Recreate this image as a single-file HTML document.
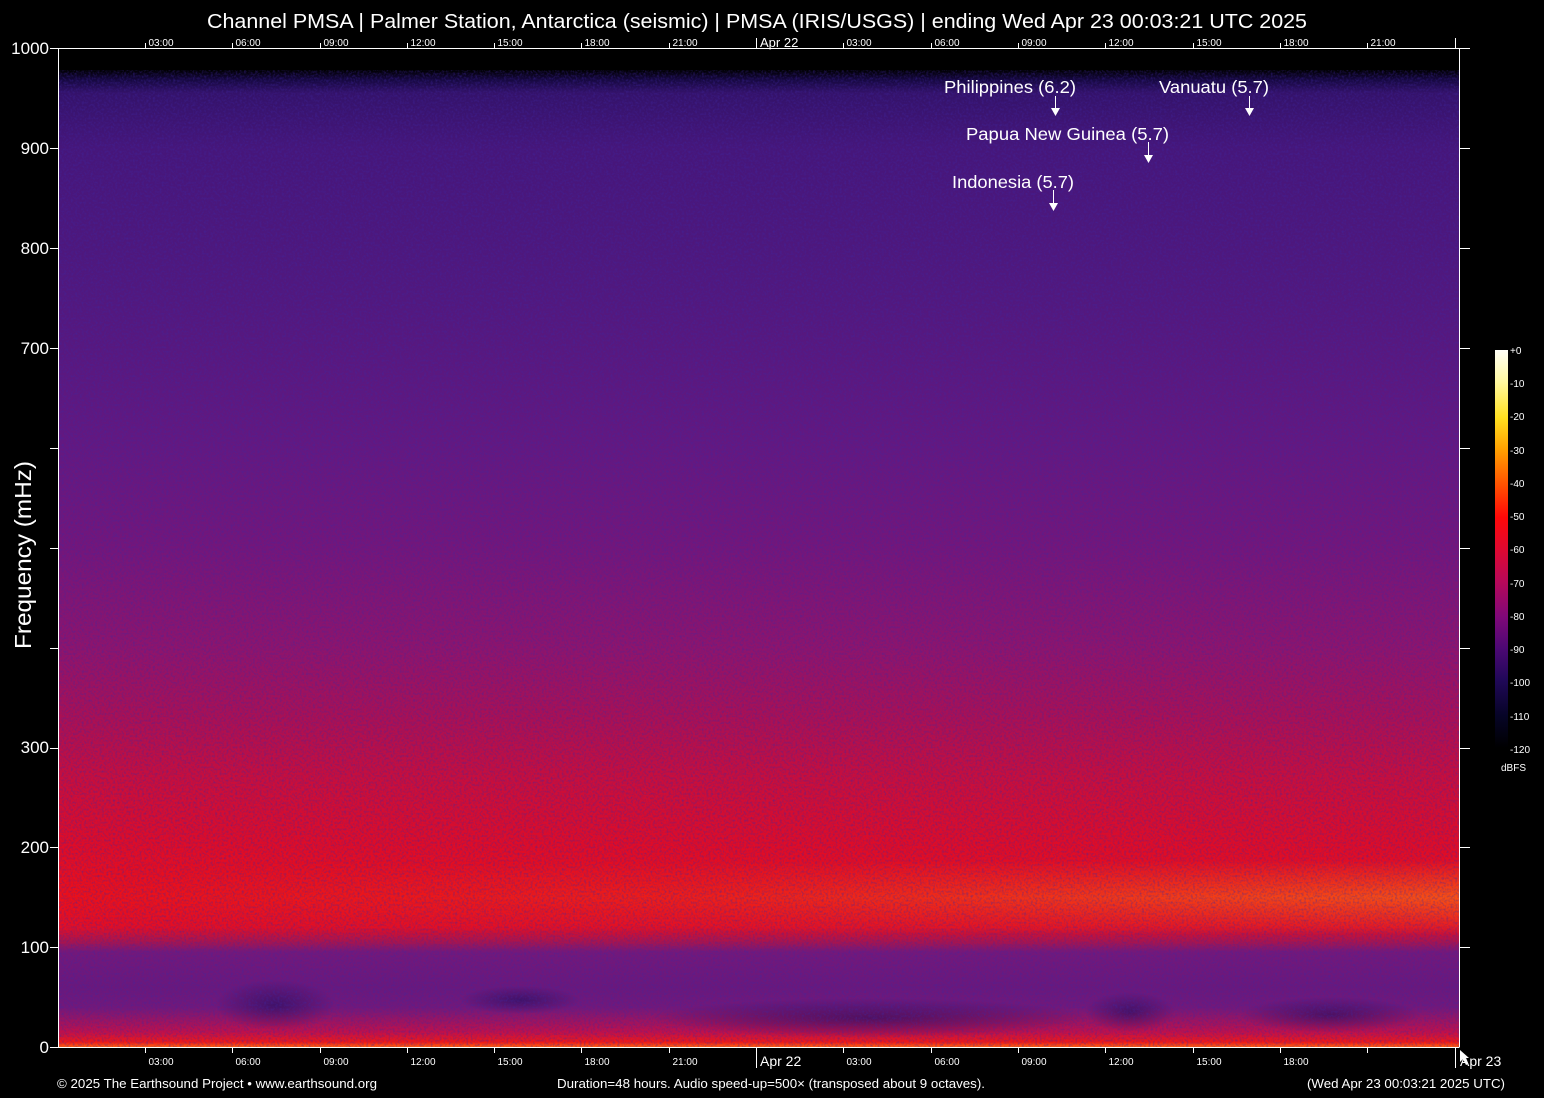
<!DOCTYPE html>
<html><head><meta charset="utf-8"><style>
html,body{margin:0;padding:0;background:#000;}
body{width:1544px;height:1098px;overflow:hidden;}
svg{display:block;font-family:"Liberation Sans",Arial,sans-serif;}
</style></head><body>
<svg width="1544" height="1098" viewBox="0 0 1544 1098" xmlns="http://www.w3.org/2000/svg">
<defs>
<linearGradient id="v" x1="0" y1="48" x2="0" y2="1047" gradientUnits="userSpaceOnUse">
<stop offset="0" stop-color="#000"/>
<stop offset="0.022" stop-color="#000"/>
<stop offset="0.032" stop-color="#160840"/>
<stop offset="0.045" stop-color="#34126a"/>
<stop offset="0.1" stop-color="#46167a"/>
<stop offset="0.25" stop-color="#52187e"/>
<stop offset="0.4" stop-color="#641880"/>
<stop offset="0.5" stop-color="#74167a"/>
<stop offset="0.6" stop-color="#8e146c"/>
<stop offset="0.67" stop-color="#aa1054"/>
<stop offset="0.73" stop-color="#c80e3c"/>
<stop offset="0.8" stop-color="#e00c26"/>
<stop offset="0.85" stop-color="#ec101a"/>
<stop offset="0.88" stop-color="#e40e24"/>
<stop offset="0.895" stop-color="#a8144e"/>
<stop offset="0.905" stop-color="#74187a"/>
<stop offset="0.94" stop-color="#6a187c"/>
<stop offset="0.96" stop-color="#72187a"/>
<stop offset="0.985" stop-color="#c0104a"/>
<stop offset="0.995" stop-color="#f01818"/>
<stop offset="1" stop-color="#ff6010"/>
</linearGradient>
<linearGradient id="h" x1="58" y1="0" x2="1459" y2="0" gradientUnits="userSpaceOnUse">
<stop offset="0" stop-color="#ff6a10" stop-opacity="0"/>
<stop offset="0.45" stop-color="#ff6a10" stop-opacity="0.15"/>
<stop offset="1" stop-color="#ff7a10" stop-opacity="0.6"/>
</linearGradient>
<linearGradient id="mv" x1="0" y1="860" x2="0" y2="935" gradientUnits="userSpaceOnUse">
<stop offset="0" stop-color="#fff" stop-opacity="0"/>
<stop offset="0.5" stop-color="#fff" stop-opacity="1"/>
<stop offset="1" stop-color="#fff" stop-opacity="0"/>
</linearGradient>
<mask id="m"><rect x="58" y="860" width="1401" height="75" fill="url(#mv)"/></mask>
<linearGradient id="cb" x1="0" y1="350" x2="0" y2="748" gradientUnits="userSpaceOnUse">
<stop offset="0" stop-color="#fffff8"/>
<stop offset="0.08" stop-color="#fff8a0"/>
<stop offset="0.17" stop-color="#ffe020"/>
<stop offset="0.25" stop-color="#ffa000"/>
<stop offset="0.34" stop-color="#ff5000"/>
<stop offset="0.42" stop-color="#ff0808"/>
<stop offset="0.5" stop-color="#e00830"/>
<stop offset="0.58" stop-color="#b80858"/>
<stop offset="0.67" stop-color="#800878"/>
<stop offset="0.75" stop-color="#4c0874"/>
<stop offset="0.83" stop-color="#200858"/>
<stop offset="0.92" stop-color="#060426"/>
<stop offset="1" stop-color="#000"/>
</linearGradient>
<filter id="n" x="0" y="0" width="100%" height="100%">
<feTurbulence type="fractalNoise" baseFrequency="0.45" numOctaves="2" seed="3"/>
<feColorMatrix type="matrix" values="0 0 0 0 0.05  0 0 0 0 0.02  0 0 0 0 0.35  0 0 0 -2.2 1.3"/>
</filter>
<radialGradient id="dk" cx="0.5" cy="0.5" r="0.5">
<stop offset="0" stop-color="#1a0c5a" stop-opacity="0.55"/>
<stop offset="1" stop-color="#1a0c5a" stop-opacity="0"/>
</radialGradient>
</defs>
<rect x="58" y="48" width="1401" height="999" fill="url(#v)"/>
<rect x="58" y="860" width="1401" height="75" fill="url(#h)" mask="url(#m)"/>
<ellipse cx="870" cy="1018" rx="220" ry="20" fill="url(#dk)"/>
<ellipse cx="1330" cy="1015" rx="90" ry="18" fill="url(#dk)"/>
<ellipse cx="1130" cy="1012" rx="45" ry="20" fill="url(#dk)"/>
<ellipse cx="275" cy="1005" rx="60" ry="25" fill="url(#dk)"/>
<ellipse cx="520" cy="1000" rx="60" ry="14" fill="url(#dk)"/>
<rect x="58" y="70" width="1401" height="977" filter="url(#n)" opacity="0.45"/>

<g stroke="#fff" stroke-width="1" fill="none">
<path d="M58.5 48V1047.5M58 48.5H1459M58 1047.5H1459M1459.5 48V1047.5"/>
<path d="M50 48.5H58M50 148.5H58M50 248.5H58M50 348.5H58M50 448.5H58M50 548.5H58M50 648.5H58M50 748.5H58M50 847.5H58M50 947.5H58M50 1047.5H58"/>
<path d="M1459 48.5H1470M1459 148.5H1470M1459 248.5H1470M1459 348.5H1470M1459 448.5H1470M1459 548.5H1470M1459 648.5H1470M1459 748.5H1470M1459 847.5H1470M1459 947.5H1470"/>
<path d="M145.5 1047V1053M232.5 1047V1053M320.5 1047V1053M407.5 1047V1053M494.5 1047V1053M581.5 1047V1053M669.5 1047V1053M756.5 1047V1068M843.5 1047V1053M931.5 1047V1053M1018.5 1047V1053M1105.5 1047V1053M1193.5 1047V1053M1280.5 1047V1053M1367.5 1047V1053M1455.5 1047V1068"/>
<path d="M145.5 43V48M232.5 43V48M320.5 43V48M407.5 43V48M494.5 43V48M581.5 43V48M669.5 43V48M756.5 38V48M843.5 43V48M931.5 43V48M1018.5 43V48M1105.5 43V48M1193.5 43V48M1280.5 43V48M1367.5 43V48M1455.5 38V48"/>
<path d="M1055.5 96V110M1249.5 96V110M1148.5 142V157M1053.5 190V205"/>
</g>
<g fill="#fff">
<path d="M1051 108H1060L1055.5 116Z M1245 108H1254L1249.5 116Z M1144 155H1153L1148.5 163Z M1049 203H1058L1053.5 211Z"/>
<path d="M1460 1050L1460 1062L1463 1059L1466 1065L1468 1064L1465 1058L1469 1058Z"/>
</g>
<rect x="1495" y="350" width="13" height="398" fill="url(#cb)"/>

<g fill="#fff">
<text x="207" y="28" font-size="20.5" textLength="1100" lengthAdjust="spacingAndGlyphs">Channel PMSA | Palmer Station, Antarctica (seismic) | PMSA (IRIS/USGS) | ending Wed Apr 23 00:03:21 UTC 2025</text>
<g font-size="17" text-anchor="end">
<text x="49" y="54">1000</text><text x="49" y="154">900</text><text x="49" y="254">800</text><text x="49" y="354">700</text>
<text x="49" y="753">300</text><text x="49" y="853">200</text><text x="49" y="953">100</text><text x="49" y="1053">0</text>
</g>
<text transform="translate(31,555) rotate(-90)" font-size="23" text-anchor="middle" textLength="188" lengthAdjust="spacingAndGlyphs">Frequency (mHz)</text>
<g font-size="10" text-anchor="middle">
<text x="161" y="46">03:00</text><text x="248" y="46">06:00</text><text x="336" y="46">09:00</text><text x="423" y="46">12:00</text>
<text x="510" y="46">15:00</text><text x="597" y="46">18:00</text><text x="685" y="46">21:00</text>
<text x="859" y="46">03:00</text><text x="947" y="46">06:00</text><text x="1034" y="46">09:00</text><text x="1121" y="46">12:00</text>
<text x="1209" y="46">15:00</text><text x="1296" y="46">18:00</text><text x="1383" y="46">21:00</text>
<text x="161" y="1065">03:00</text><text x="248" y="1065">06:00</text><text x="336" y="1065">09:00</text><text x="423" y="1065">12:00</text>
<text x="510" y="1065">15:00</text><text x="597" y="1065">18:00</text><text x="685" y="1065">21:00</text>
<text x="859" y="1065">03:00</text><text x="947" y="1065">06:00</text><text x="1034" y="1065">09:00</text><text x="1121" y="1065">12:00</text>
<text x="1209" y="1065">15:00</text><text x="1296" y="1065">18:00</text>
</g>
<text x="760" y="47" font-size="13">Apr 22</text>
<text x="760" y="1066" font-size="14">Apr 22</text>
<text x="1460" y="1066" font-size="14">Apr 23</text>
<g font-size="17.5">
<text x="944" y="93" textLength="132" lengthAdjust="spacingAndGlyphs">Philippines (6.2)</text>
<text x="1159" y="93" textLength="110" lengthAdjust="spacingAndGlyphs">Vanuatu (5.7)</text>
<text x="966" y="140" textLength="203" lengthAdjust="spacingAndGlyphs">Papua New Guinea (5.7)</text>
<text x="952" y="188" textLength="122" lengthAdjust="spacingAndGlyphs">Indonesia (5.7)</text>
</g>
<g font-size="10">
<text x="1510" y="354">+0</text><text x="1510" y="387">-10</text><text x="1510" y="420">-20</text><text x="1510" y="454">-30</text>
<text x="1510" y="487">-40</text><text x="1510" y="520">-50</text><text x="1510" y="553">-60</text><text x="1510" y="587">-70</text>
<text x="1510" y="620">-80</text><text x="1510" y="653">-90</text><text x="1510" y="686">-100</text><text x="1510" y="720">-110</text>
<text x="1510" y="753">-120</text>
<text x="1501" y="771">dBFS</text>
</g>
<text x="57" y="1088" font-size="13" textLength="320" lengthAdjust="spacingAndGlyphs">© 2025 The Earthsound Project • www.earthsound.org</text>
<text x="557" y="1088" font-size="13" textLength="428" lengthAdjust="spacingAndGlyphs">Duration=48 hours. Audio speed-up=500× (transposed about 9 octaves).</text>
<text x="1307" y="1088" font-size="13" textLength="198" lengthAdjust="spacingAndGlyphs">(Wed Apr 23 00:03:21 2025 UTC)</text>
</g>
</svg>
</body></html>
